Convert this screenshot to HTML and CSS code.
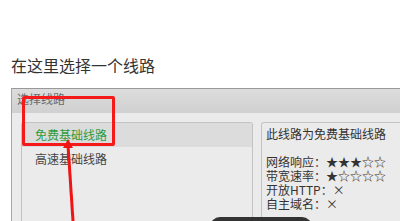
FILE: index.html
```html
<!DOCTYPE html>
<html lang="zh">
<head>
<meta charset="utf-8">
<link rel="stylesheet" href="styles.css">
</head>
<body>
<div class="page">
  <h1 class="heading">在这里选择一个线路</h1>
  <div class="dialog">
    <div class="dialog-title">选择线路</div>
    <div class="dialog-body">
      <div class="list">
        <div class="item active">免费基础线路</div>
        <div class="item">高速基础线路</div>
      </div>
      <div class="info">
        <div class="line">此线路为免费基础线路</div>
        <div class="line">&nbsp;</div>
        <div class="line">网络响应：★★★☆☆</div>
        <div class="line">带宽速率：★☆☆☆☆</div>
        <div class="line">开放HTTP：×</div>
        <div class="line">自主域名：×</div>
      </div>
    </div>
  </div>
  <div class="highlight"></div>
  <svg class="arrow" width="20" height="90" viewBox="0 0 20 90">
    <line x1="8" y1="6" x2="13" y2="82" stroke="#f01414" stroke-width="3"/>
    <polygon points="3,9 8,0 13,9" fill="#f01414"/>
  </svg>
  <div class="bubble"></div>
</div>
</body>
</html>
```
FILE: styles.css
```css
html, body {
  margin: 0;
  padding: 0;
  background: #ffffff;
  overflow: hidden;
}
.page {
  position: relative;
  width: 400px;
  height: 221px;
  overflow: hidden;
  font-family: "Noto Sans CJK SC", "Liberation Sans", sans-serif;
}
.heading {
  margin: 0;
  padding: 53px 0 0 11px;
  font-size: 16px;
  line-height: 24px;
  font-weight: normal;
  color: #333333;
}
.dialog {
  margin: 11px 0 0 11px;
  width: 420px;
  height: 140px;
  border-top: 1px solid #999999;
  border-left: 1px solid #a8a8a8;
  background: #ebebeb;
}
.dialog-title {
  height: 24px;
  padding-left: 5px;
  font-size: 12px;
  line-height: 20px;
  color: #6a6a6a;
  background: linear-gradient(#dcdcdc, #d0d0d0);
}
.dialog-body {
  display: flex;
  padding: 9px 0 0 9px;
  height: 120px;
}
.list {
  width: 230px;
  border: 1px solid #c2c2c2;
  border-bottom: none;
  border-radius: 3px 3px 0 0;
  background: #ebebeb;
}
.item {
  height: 24px;
  padding-left: 13px;
  font-size: 12px;
  line-height: 24px;
  color: #444444;
}
.item.active {
  background: #dcdcdc;
  color: #2f9b3c;
}
.info {
  margin-left: 8px;
  flex: 1;
  border: 1px solid #c2c2c2;
  border-bottom: none;
  border-radius: 3px 0 0 0;
  padding: 4px 0 0 4px;
  font-size: 12px;
  line-height: 14px;
  color: #333333;
}
.line {
  white-space: nowrap;
  height: 14px;
}
.highlight {
  position: absolute;
  left: 22px;
  top: 96px;
  width: 87px;
  height: 44px;
  border: 3px solid #f51a1a;
  border-radius: 2px;
}
.arrow {
  position: absolute;
  left: 60px;
  top: 139px;
}
.bubble {
  position: absolute;
  left: 210px;
  top: 217px;
  width: 102px;
  height: 20px;
  background: #333333;
  border-radius: 10px 10px 0 0;
}
```
